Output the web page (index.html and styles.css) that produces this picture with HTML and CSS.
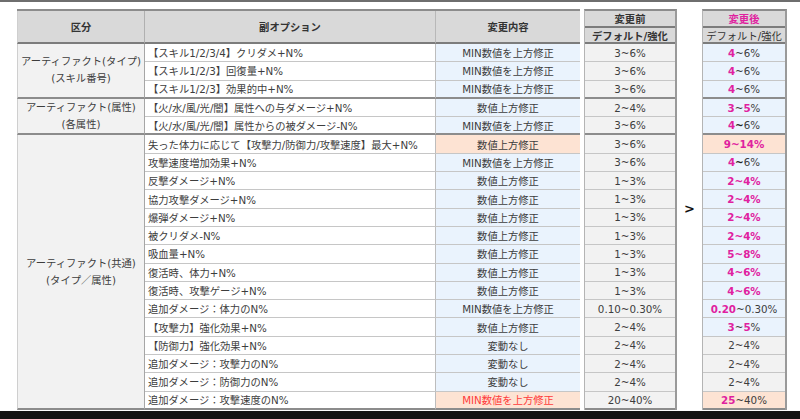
FILE: index.html
```html
<!DOCTYPE html>
<html lang="ja">
<head>
<meta charset="utf-8">
<title>副オプション変更</title>
<link rel="stylesheet" href="styles.css">
</head>
<body>
<div class="topline"></div>
<div class="page">
  <div class="t1">
    <div class="c h hc1">区分</div>
    <div class="c h hc2">副オプション</div>
    <div class="c h hc3">変更内容</div>

    <div class="c lab s3">アーティファクト(タイプ)<br>(スキル番号)</div>
    <div class="c opt">【スキル1/2/3/4】クリダメ+N%</div>
    <div class="c chg">MIN数値を上方修正</div>
    <div class="c opt">【スキル1/2/3】回復量+N%</div>
    <div class="c chg">MIN数値を上方修正</div>
    <div class="c opt end">【スキル1/2/3】効果的中+N%</div>
    <div class="c chg end">MIN数値を上方修正</div>

    <div class="c lab s2">アーティファクト(属性)<br>(各属性)</div>
    <div class="c opt">【火/水/風/光/闇】属性への与ダメージ+N%</div>
    <div class="c chg">数値上方修正</div>
    <div class="c opt end">【火/水/風/光/闇】属性からの被ダメージ-N%</div>
    <div class="c chg end">MIN数値を上方修正</div>

    <div class="c lab s15">アーティファクト(共通)<br>(タイプ／属性)</div>
    <div class="c opt">失った体力に応じて【攻撃力/防御力/攻撃速度】最大+N%</div>
    <div class="c chg hl">数値上方修正</div>
    <div class="c opt">攻撃速度増加効果+N%</div>
    <div class="c chg">MIN数値を上方修正</div>
    <div class="c opt">反撃ダメージ+N%</div>
    <div class="c chg">数値上方修正</div>
    <div class="c opt">協力攻撃ダメージ+N%</div>
    <div class="c chg">数値上方修正</div>
    <div class="c opt">爆弾ダメージ+N%</div>
    <div class="c chg">数値上方修正</div>
    <div class="c opt">被クリダメ-N%</div>
    <div class="c chg">数値上方修正</div>
    <div class="c opt">吸血量+N%</div>
    <div class="c chg">数値上方修正</div>
    <div class="c opt">復活時、体力+N%</div>
    <div class="c chg">数値上方修正</div>
    <div class="c opt">復活時、攻撃ゲージ+N%</div>
    <div class="c chg">数値上方修正</div>
    <div class="c opt">追加ダメージ：体力のN%</div>
    <div class="c chg">MIN数値を上方修正</div>
    <div class="c opt">【攻撃力】強化効果+N%</div>
    <div class="c chg">数値上方修正</div>
    <div class="c opt">【防御力】強化効果+N%</div>
    <div class="c chg">変動なし</div>
    <div class="c opt">追加ダメージ：攻撃力のN%</div>
    <div class="c chg">変動なし</div>
    <div class="c opt">追加ダメージ：防御力のN%</div>
    <div class="c chg">変動なし</div>
    <div class="c opt end">追加ダメージ：攻撃速度のN%</div>
    <div class="c chg hl red end">MIN数値を上方修正</div>
  </div>

  <div class="t2">
    <div class="c h top">変更前</div>
    <div class="c h sub">デフォルト/強化</div>
    <div class="c v">3~6%</div>
    <div class="c v">3~6%</div>
    <div class="c v end">3~6%</div>
    <div class="c v">2~4%</div>
    <div class="c v end">3~6%</div>
    <div class="c v">3~6%</div>
    <div class="c v">3~6%</div>
    <div class="c v">1~3%</div>
    <div class="c v">1~3%</div>
    <div class="c v">1~3%</div>
    <div class="c v">1~3%</div>
    <div class="c v">1~3%</div>
    <div class="c v">1~3%</div>
    <div class="c v">1~3%</div>
    <div class="c v">0.10~0.30%</div>
    <div class="c v">2~4%</div>
    <div class="c v">2~4%</div>
    <div class="c v">2~4%</div>
    <div class="c v">2~4%</div>
    <div class="c v end">20~40%</div>
  </div>

  <div class="arrow">&gt;</div>

  <div class="t3">
    <div class="c h top pinkh">変更後</div>
    <div class="c h sub norm">デフォルト/強化</div>
    <div class="c nv"><span class="p">4</span>~6%</div>
    <div class="c nv"><span class="p">4</span>~6%</div>
    <div class="c nv end"><span class="p">4</span>~6%</div>
    <div class="c nv"><span class="p">3</span>~<span class="p">5</span>%</div>
    <div class="c nv end"><span class="p">4</span><b class="dk">~</b>6%</div>
    <div class="c nv hl"><span class="p">9~14%</span></div>
    <div class="c nv"><span class="p">4</span><b class="dk">~</b>6%</div>
    <div class="c nv"><span class="p">2~4%</span></div>
    <div class="c nv"><span class="p">2~4%</span></div>
    <div class="c nv"><span class="p">2~4%</span></div>
    <div class="c nv"><span class="p">2~4%</span></div>
    <div class="c nv"><span class="p">5~8%</span></div>
    <div class="c nv"><span class="p">4~6%</span></div>
    <div class="c nv"><span class="p">4~6%</span></div>
    <div class="c nv"><span class="p">0.20</span>~0.30%</div>
    <div class="c nv"><span class="p">3</span>~<span class="p">5</span>%</div>
    <div class="c nv gr">2~4%</div>
    <div class="c nv gr">2~4%</div>
    <div class="c nv gr">2~4%</div>
    <div class="c nv hl end"><span class="p">25</span>~40%</div>
  </div>
</div>
<div class="bottombar"></div>
</body>
</html>
```

FILE: styles.css
```css
* {
  box-sizing: border-box;
}

html,
body {
  margin: 0;
  padding: 0;
  height: 100%;
}

body {
  background: #ffffff;
  font-family: "DejaVu Sans", "Noto Sans CJK JP", sans-serif;
  font-size: 10.3px;
  color: #3d3d3d;
  display: flex;
  flex-direction: column;
  overflow: hidden;
}

.topline {
  flex: none;
  height: 2px;
  background: #6e6e6e;
}

.page {
  flex: none;
  display: flex;
  align-items: flex-start;
  padding: 7px 0 0 17px;
}

.t1 {
  display: grid;
  grid-template-columns: 128px 291px 144px;
  grid-template-rows: 33px;
  grid-auto-rows: 18.3px;
  border-top: 2px solid #8c8c8c;
}

.t2,
.t3 {
  display: grid;
  grid-template-columns: 1fr;
  grid-template-rows: 17px 16px;
  grid-auto-rows: 18.3px;
  border-top: 2px solid #8c8c8c;
  border-left: 1px solid #b4b4b4;
  border-right: 2px solid #9a9a9a;
}

.t2 {
  width: 93px;
  margin-left: 4px;
}

.t3 {
  width: 85px;
}

.arrow {
  width: 25px;
  padding-top: 192px;
  text-align: center;
  font-size: 13px;
  line-height: 16px;
  font-weight: bold;
  color: #111111;
}

.c {
  display: flex;
  align-items: center;
  white-space: nowrap;
  overflow: hidden;
  border-bottom: 1px solid #c6c6c6;
}

.h {
  justify-content: center;
  background: #d9d9d9;
  font-weight: bold;
  color: #333333;
  border-bottom: 2px solid #7c7c7c;
}

.hc1 {
  border-left: 1px solid #cfcfcf;
  border-right: 1px solid #b0b0b0;
}

.hc2 {
  border-right: 1px solid #b8b8b8;
}

.lab {
  justify-content: center;
  text-align: center;
  line-height: 17px;
  background: #f2f2f2;
  border-left: 1px solid #cfcfcf;
  border-right: 1px solid #a6a6a6;
  border-bottom: 2px solid #8c8c8c;
}

.s3 {
  grid-row: span 3;
}

.s2 {
  grid-row: span 2;
}

.s15 {
  grid-row: span 15;
}

.opt {
  padding-left: 3px;
  background: #ffffff;
  border-right: 1px solid #bdbdbd;
}

.chg {
  justify-content: center;
  background: #eaf3fd;
}

.v {
  justify-content: center;
  background: #f2f2f2;
}

.nv {
  justify-content: center;
  background: #eaf3fd;
}

.nv.gr {
  background: #f2f2f2;
}

.hl,
.nv.hl {
  background: #fde3d3;
}

.red {
  color: #ff3b3b;
}

.end {
  border-bottom: 2px solid #8c8c8c;
}

.pinkh {
  color: #e0219f;
}

.norm {
  font-weight: normal;
}

.p {
  color: #e0219f;
  font-weight: bold;
}

.dk {
  color: #222222;
}

.bottombar {
  flex: 1;
  margin-top: 1px;
  background: #141414;
}
```
